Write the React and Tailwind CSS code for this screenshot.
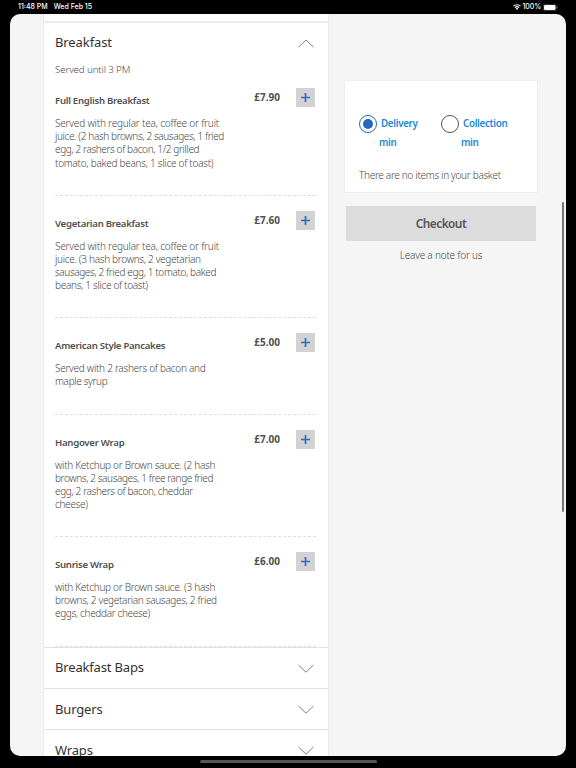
import React, { useState } from 'react';

// each description line carries its own tracking
const items = [
  {
    name: 'Full English Breakfast', price: '£7.90',
    lines: [
      ['Served with regular tea, coffee or fruit', 'tracking-[-0.19px]'],
      ['juice. (2 hash browns, 2 sausages, 1 fried', 'tracking-[-0.37px]'],
      ['egg, 2 rashers of bacon, 1/2 grilled', 'tracking-[-0.37px]'],
      ['tomato, baked beans, 1 slice of toast)', 'tracking-[-0.26px]'],
    ],
  },
  {
    name: 'Vegetarian Breakfast', price: '£7.60',
    lines: [
      ['Served with regular tea, coffee or fruit', 'tracking-[-0.19px]'],
      ['juice. (3 hash browns, 2 vegetarian', 'tracking-[-0.3px]'],
      ['sausages, 2 fried egg, 1 tomato, baked', 'tracking-[-0.37px]'],
      ['beans, 1 slice of toast)', 'tracking-[-0.3px]'],
    ],
  },
  {
    name: 'American Style Pancakes', price: '£5.00',
    lines: [
      ['Served with 2 rashers of bacon and', 'tracking-[-0.27px]'],
      ['maple syrup', 'tracking-[-0.33px]'],
    ],
  },
  {
    name: 'Hangover Wrap', price: '£7.00',
    lines: [
      ['with Ketchup or Brown sauce. (2 hash', 'tracking-[-0.28px]'],
      ['browns, 2 sausages, 1 free range fried', 'tracking-[-0.38px]'],
      ['egg, 2 rashers of bacon, cheddar', 'tracking-[-0.35px]'],
      ['cheese)', 'tracking-[-0.3px]'],
    ],
  },
  {
    name: 'Sunrise Wrap', price: '£6.00',
    lines: [
      ['with Ketchup or Brown sauce. (3 hash', 'tracking-[-0.28px]'],
      ['browns, 2 vegetarian sausages, 2 fried', 'tracking-[-0.31px]'],
      ['eggs, cheddar cheese)', 'tracking-[-0.33px]'],
    ],
  },
];

const categories = ['Breakfast Baps', 'Burgers', 'Wraps'];

function Chevron({ up }) {
  return (
    <svg width="16" height="9" viewBox="0 0 16 9" fill="none" stroke="#707070" strokeWidth="0.9">
      <path d={up ? 'M0.5 8.2 8 1l7.5 7.2' : 'M0.5 1 8 8.2l7.5-7.2'} />
    </svg>
  );
}

function StatusBar() {
  return (
    <div className="h-[14px] shrink-0 flex items-center justify-between pl-[18px] pr-[18px] text-white text-[7px] font-medium font-[Inter,sans-serif]">
      <div className="flex gap-[6px]">
        <span>11:48 PM</span>
        <span>Wed Feb 15</span>
      </div>
      <div className="flex items-center gap-[2px]">
        <svg width="8" height="6" viewBox="0 0 16 12" fill="none" stroke="white" strokeWidth="2.2">
          <path d="M1 4.3a10 10 0 0 1 14 0M3.8 7.3a6 6 0 0 1 8.4 0" />
          <path d="M8 12 5.3 9.3a3.8 3.8 0 0 1 5.4 0z" fill="white" stroke="none" />
        </svg>
        <span className="tracking-[-0.1px]">100%</span>
        <svg width="15" height="7" viewBox="0 0 15 7">
          <rect x="0.25" y="0.25" width="13" height="6.5" rx="2" fill="none" stroke="#777" strokeWidth="0.5" />
          <rect x="1" y="1" width="11.5" height="5" rx="1.3" fill="white" />
          <path d="M14 2.4c1 .4 1 1.8 0 2.2z" fill="#888" />
        </svg>
      </div>
    </div>
  );
}

function MenuItem({ item }) {
  return (
    <div className="flex border-b border-dashed border-[#dedede] pt-[15px] pb-[25.15px]">
      <div className="w-[190px] shrink-0 pt-[5px]">
        <h3 className="text-[9.6px] leading-[15px] font-semibold tracking-[-0.27px] text-[#505050] whitespace-nowrap">{item.name}</h3>
        <div className="pt-[9px] text-[10px] leading-[13.1px] font-light text-[#484848] whitespace-nowrap">
          {item.lines.map(([line, tracking]) => <p key={line} className={tracking}>{line}</p>)}
        </div>
      </div>
      <span className="w-[35px] text-right text-[10px] leading-[19px] font-bold text-[#505050]">{item.price}</span>
      <button type="button" className="ml-[16px] w-[19px] h-[19px] bg-[#d2d2d2] flex items-center justify-center">
        <svg width="9" height="9" viewBox="0 0 9 9" stroke="#2a6ec6" strokeWidth="1.7"><path d="M4.5 0v9M0 4.5h9" /></svg>
      </button>
    </div>
  );
}

function OrderOption({ label, checked, onClick }) {
  return (
    <button type="button" onClick={onClick} className="w-[82px] flex items-start text-left text-[#2088dc]">
      <span className={`w-[18px] h-[18px] rounded-full border shrink-0 flex items-center justify-center ${checked ? 'border-[#2468bd]' : 'border-[#555]'}`}>
        {checked && <span className="w-[10px] h-[10px] rounded-full bg-[#2468bd]" />}
      </span>
      <span className="pl-[2px] text-[9.8px] leading-[19px] font-semibold tracking-[-0.32px] -mt-px">
        <span className="block pl-[2px]">{label}</span>
        <span className="block">min</span>
      </span>
    </button>
  );
}

export default function App() {
  const [mode, setMode] = useState('Delivery');

  return (
    <div className="w-[576px] h-[768px] bg-black overflow-hidden flex flex-col font-['Noto_Sans',sans-serif]">
      <StatusBar />
      <div className="relative ml-[10px] w-[556px] h-[742px] shrink-0 bg-[#f5f5f5] rounded-[10px] overflow-hidden flex items-start">
        <main className="ml-[33px] w-[286px] shrink-0 bg-white border-x border-[#ececec]">
          <div className="h-[9px] border-b-2 border-[#ececec]" />
          <section className="pl-[11px] pr-[12px]">
            <div className="h-[41px] flex items-center justify-between pr-[2px]">
              <h2 className="pb-[2px] text-[13px] tracking-[-0.1px] text-[#333]">Breakfast</h2>
              <Chevron up />
            </div>
            <p className="h-[9.3px] pt-[4px] flex items-center text-[9.8px] tracking-[-0.15px] font-light text-[#484848]">Served until 3 PM</p>
            {items.map((item) => <MenuItem key={item.name} item={item} />)}
          </section>
          {categories.map((name) => (
            <div key={name} className="h-[41.3px] border-t border-[#e2e2e2] flex items-center justify-between pt-px pl-[11px] pr-[14px]">
              <h2 className="text-[13px] tracking-[-0.17px] text-[#333]">{name}</h2>
              <Chevron />
            </div>
          ))}
        </main>

        <aside className="ml-[15px] mt-[66px] w-[194px]">
          <div className="h-[113px] bg-white border border-[#eee] pl-[14px] pt-[34px]">
            <div className="flex">
              <OrderOption label="Delivery" checked={mode === 'Delivery'} onClick={() => setMode('Delivery')} />
              <OrderOption label="Collection" checked={mode === 'Collection'} onClick={() => setMode('Collection')} />
            </div>
            <p className="mt-[13px] text-[10px] leading-[20px] tracking-[-0.3px] font-light text-[#484848]">There are no items in your basket</p>
          </div>
          <button type="button" className="mt-[13px] ml-[2px] w-[190px] h-[35px] bg-[#dcdcdc] text-[11.8px] tracking-[-0.5px] font-semibold text-[#555] block">Checkout</button>
          <p className="mt-[4px] text-center text-[10px] leading-[20px] tracking-[-0.2px] font-light text-[#484848]">Leave a note for us</p>
        </aside>
        <div className="absolute right-[2px] top-[188px] w-[2px] h-[310px] rounded-full bg-[#777]" />
      </div>
      <div className="mt-[4px] mx-auto w-[177px] h-[3px] rounded-full bg-[#555]" />
    </div>
  );
}
